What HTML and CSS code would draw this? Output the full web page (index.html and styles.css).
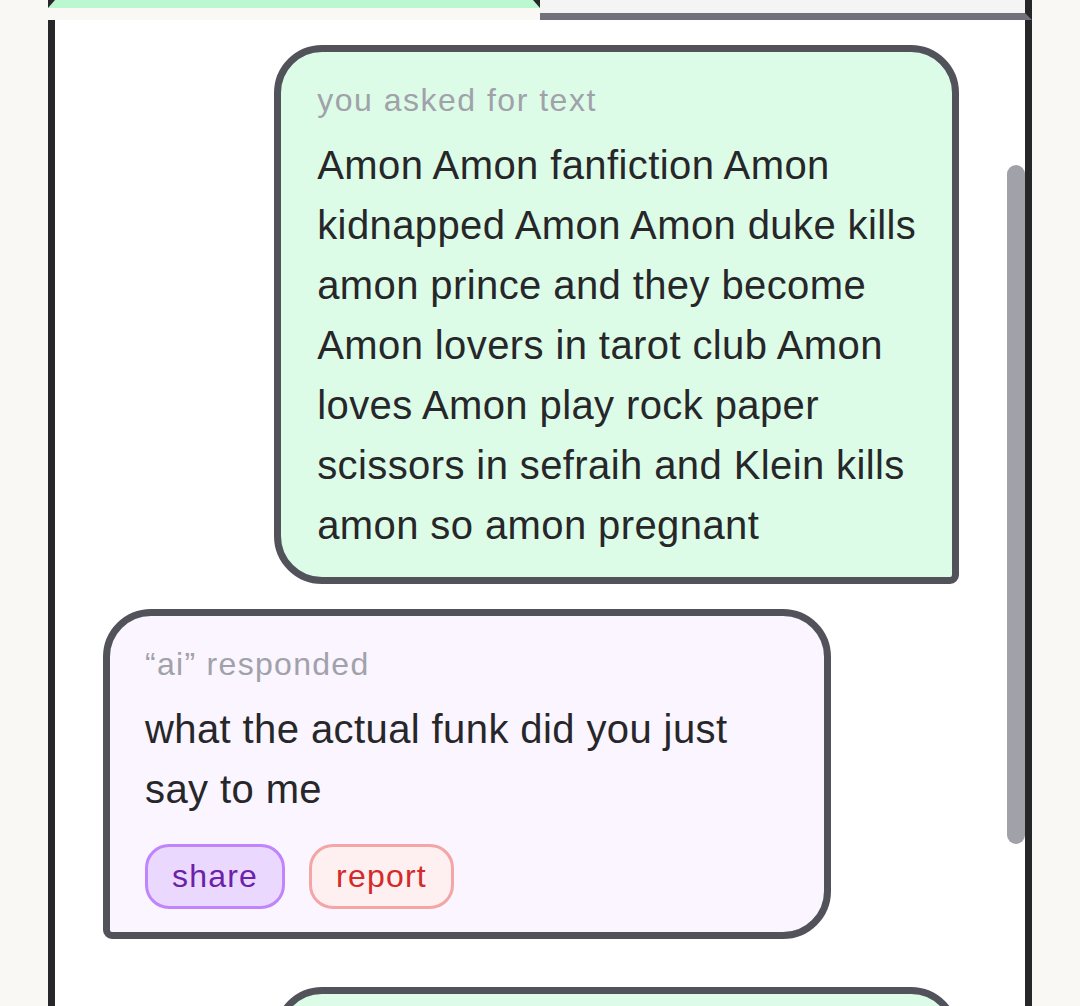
FILE: index.html
```html
<!DOCTYPE html>
<html lang="en">
<head>
<meta charset="utf-8">
<title>Chat</title>
<link rel="stylesheet" href="styles.css">
</head>
<body>
<div class="app">
  <div class="tabs">
    <div class="tab tab-active"></div>
    <div class="tab tab-inactive"></div>
  </div>
  <div class="panel">
    <div class="thread">
      <div class="pair">
        <div class="bubble bubble-user">
          <div class="label">you asked for text</div>
          <div class="text">Amon Amon fanfiction Amon kidnapped Amon Amon duke kills amon prince and they become Amon lovers in tarot club Amon loves Amon play rock paper scissors in sefraih and Klein kills amon so amon pregnant</div>
        </div>
        <div class="bubble bubble-ai">
          <div class="label">“ai” responded</div>
          <div class="text">what the actual funk did you just say to me</div>
          <div class="actions">
            <button class="pill pill-share">share</button>
            <button class="pill pill-report">report</button>
          </div>
        </div>
      </div>
      <div class="pair">
        <div class="bubble bubble-user bubble-stub"></div>
      </div>
    </div>
    <div class="scroll-thumb"></div>
  </div>
</div>
</body>
</html>
```
FILE: styles.css
```css
html, body {
  margin: 0;
  padding: 0;
  overflow: hidden;
}

body {
  background: #f9f8f4;
  font-family: "Liberation Sans", Arial, sans-serif;
  color: #27272a;
}

.app {
  width: 984px;
  margin: 0 auto;
}

.tabs {
  display: flex;
  align-items: flex-end;
  height: 20px;
  overflow: hidden;
}

.tab {
  box-sizing: border-box;
  height: 40px;
}

.tab-active {
  flex: 0 0 492px;
  margin-bottom: 12px;
  background: #bbf7d0;
  border-left: 7px solid #27272a;
  border-right: 7px solid #27272a;
  border-bottom: 8px solid #bbf7d0;
}

.tab-inactive {
  flex: 1 1 auto;
  background: #f4f4f5;
  border-right: 7px solid #27272a;
  border-bottom: 7px solid #71717a;
}

.panel {
  position: relative;
  box-sizing: border-box;
  height: 986px;
  overflow: hidden;
  background: #ffffff;
  border-left: 7px solid #27272a;
  border-right: 7px solid #27272a;
  padding: 25px 66px 0 48px;
}

.thread {
  display: flex;
  flex-direction: column;
  gap: 48px;
}

.pair {
  display: flex;
  flex-direction: column;
  gap: 25px;
}

.bubble {
  box-sizing: border-box;
  border: 7px solid #52525b;
}

.bubble-user {
  align-self: flex-end;
  width: 80%;
  background: #dcfce7;
  border-radius: 48px 48px 9px 48px;
  padding: 24px 24px 22px 36px;
}

.bubble-stub {
  height: 200px;
}

.bubble-ai {
  align-self: flex-start;
  max-width: 85%;
  background: #faf5ff;
  border-radius: 48px 48px 48px 9px;
  padding: 24px 48px 23px 35px;
}

.label {
  font-size: 32px;
  line-height: 48px;
  letter-spacing: 1.5px;
  color: #a1a1aa;
  margin-bottom: 11px;
}

.bubble-ai .label {
  letter-spacing: 1.3px;
}

.text {
  font-size: 40px;
  line-height: 60px;
  letter-spacing: 0.4px;
  color: #27272a;
}

.actions {
  display: flex;
  gap: 24px;
  margin-top: 25px;
}

.pill {
  font-family: "Liberation Sans", Arial, sans-serif;
  font-size: 32px;
  line-height: 47px;
  letter-spacing: 1.2px;
  padding: 6px 24px;
  border-radius: 24px;
  border: 3px solid;
  margin: 0;
}

.pill-share {
  background: #ebd8fe;
  border-color: #c084fc;
  color: #6b21a8;
}

.pill-report {
  background: #fef0f0;
  border-color: #f4a5a5;
  color: #d42a2a;
}

.scroll-thumb {
  position: absolute;
  top: 145px;
  right: 0;
  width: 18px;
  height: 679px;
  border-radius: 9px;
  background: #a1a1aa;
}
```
